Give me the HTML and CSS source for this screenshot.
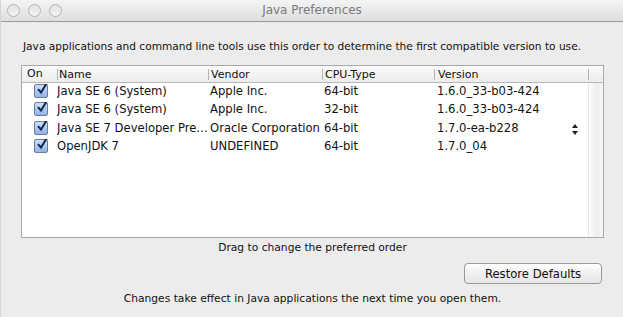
FILE: index.html
```html
<!DOCTYPE html>
<html>
<head>
<meta charset="utf-8">
<link rel="stylesheet" href="styles.css">
</head>
<body>
<div class="window">
  <div class="titlebar">
    <div class="lights"><span class="light"></span><span class="light"></span><span class="light"></span></div>
    <div class="title">Java Preferences</div>
  </div>
  <div class="content">
    <p class="intro">Java applications and command line tools use this order to determine the first compatible version to use.</p>
    <div class="table">
      <div class="thead">
        <div class="c on">On</div>
        <div class="c name sep">Name</div>
        <div class="c vendor sep">Vendor</div>
        <div class="c cpu sep">CPU-Type</div>
        <div class="c ver sep">Version</div>
        <div class="c gut sep"></div>
      </div>
      <div class="tbody">
        <div class="rows">
          <div class="row">
            <div class="c on"><span class="cb"><svg viewBox="0 0 14 14" width="14" height="14"><path d="M3 7.2 L6 10.5 L11.5 1.5" fill="none" stroke="#14284a" stroke-width="2"/></svg></span></div>
            <div class="c name">Java SE 6 (System)</div>
            <div class="c vendor">Apple Inc.</div>
            <div class="c cpu">64-bit</div>
            <div class="c ver">1.6.0_33-b03-424</div>
          </div>
          <div class="row">
            <div class="c on"><span class="cb"><svg viewBox="0 0 14 14" width="14" height="14"><path d="M3 7.2 L6 10.5 L11.5 1.5" fill="none" stroke="#14284a" stroke-width="2"/></svg></span></div>
            <div class="c name">Java SE 6 (System)</div>
            <div class="c vendor">Apple Inc.</div>
            <div class="c cpu">32-bit</div>
            <div class="c ver">1.6.0_33-b03-424</div>
          </div>
          <div class="row">
            <div class="c on"><span class="cb"><svg viewBox="0 0 14 14" width="14" height="14"><path d="M3 7.2 L6 10.5 L11.5 1.5" fill="none" stroke="#14284a" stroke-width="2"/></svg></span></div>
            <div class="c name">Java SE 7 Developer Pre…</div>
            <div class="c vendor">Oracle Corporation</div>
            <div class="c cpu">64-bit</div>
            <div class="c ver">1.7.0-ea-b228<span class="stepper"><svg viewBox="0 0 6 11" width="6" height="11"><path d="M3 0 L6 4 L0 4 Z M0 7 L6 7 L3 11 Z" fill="#222"/></svg></span></div>
          </div>
          <div class="row">
            <div class="c on"><span class="cb"><svg viewBox="0 0 14 14" width="14" height="14"><path d="M3 7.2 L6 10.5 L11.5 1.5" fill="none" stroke="#14284a" stroke-width="2"/></svg></span></div>
            <div class="c name">OpenJDK 7</div>
            <div class="c vendor">UNDEFINED</div>
            <div class="c cpu">64-bit</div>
            <div class="c ver">1.7.0_04</div>
          </div>
        </div>
        <div class="gutter"></div>
      </div>
    </div>
    <p class="hint">Drag to change the preferred order</p>
    <div class="btnrow"><button class="btn">Restore Defaults</button></div>
    <p class="hint foot">Changes take effect in Java applications the next time you open them.</p>
  </div>
</div>
</body>
</html>
```

FILE: styles.css
```css
html, body {
  margin: 0;
  padding: 0;
  background: #ececec;
}
body {
  width: 623px;
  height: 317px;
  overflow: hidden;
  font-family: "DejaVu Sans", "Liberation Sans", sans-serif;
  font-size: 10.7px;
  color: #111;
}
.window {
  width: 623px;
  height: 317px;
  display: flex;
  flex-direction: column;
  border-left: 1px solid #d4d4d4;
  box-sizing: border-box;
}
.titlebar {
  height: 21px;
  flex: none;
  display: flex;
  align-items: center;
  position: relative;
  background: linear-gradient(#f4f4f4, #dedede);
  border-bottom: 1px solid #9a9a9a;
}
.lights {
  display: flex;
  gap: 8px;
  padding-left: 6px;
}
.light {
  width: 11px;
  height: 11px;
  border-radius: 50%;
  border: 1px solid #b4b4b4;
  background: linear-gradient(#e2e2e2, #f4f4f4);
}
.title {
  position: absolute;
  left: 0;
  right: 0;
  top: 0;
  line-height: 21px;
  text-align: center;
  color: #7a7a7a;
  font-size: 12px;
}
.content {
  flex: 1;
  padding: 0 19px 0 20px;
  display: flex;
  flex-direction: column;
}
.intro {
  margin: 18px 0 0 2px;
  font-size: 10.6px;
  line-height: 13px;
  white-space: nowrap;
}
.table {
  margin-top: 12px;
  height: 171px;
  flex: none;
  border: 1px solid #a9a9a9;
  background: #fff;
  display: flex;
  flex-direction: column;
}
.thead {
  height: 16px;
  flex: none;
  display: flex;
  background: linear-gradient(#fafafa, #ececec);
  border-bottom: 1px solid #b8b8b8;
  line-height: 16px;
  font-size: 11px;
}
.c {
  box-sizing: border-box;
  white-space: nowrap;
  overflow: hidden;
}
.thead .sep {
  border-left: 1px solid #b4b4b4;
  height: 11px;
  margin-top: 3px;
  line-height: 11px;
}
.on { width: 35px; padding-left: 5px; }
.name { width: 151px; padding-left: 1px; }
.vendor { width: 114px; padding-left: 2px; }
.cpu { width: 112px; padding-left: 2px; }
.ver { width: 154px; padding-left: 3px; position: relative; }
.gut { flex: 1; }
.tbody {
  flex: 1;
  display: flex;
}
.rows {
  flex: 1;
  margin-top: -1px;
}
.gutter {
  width: 15px;
  background: linear-gradient(90deg, #fafafa, #eeeeee 60%, #f6f6f6);
  border-left: 1px solid #e6e6e6;
}
.row {
  display: flex;
  height: 18.3px;
  align-items: center;
  font-size: 11.6px;
}
.row .on {
  padding-left: 12px;
  display: flex;
  align-items: center;
}
.row .name { padding-left: 0; }
.cb {
  width: 12px;
  height: 12px;
  border: 1px solid #6c7d99;
  border-radius: 2px;
  background: linear-gradient(#cde0f8, #8fb4e8);
  position: relative;
  display: block;
}
.cb svg {
  position: absolute;
  left: 0;
  top: -3px;
}
.stepper {
  position: absolute;
  left: 138px;
  top: 3px;
  line-height: 0;
}
.hint {
  margin: 3px 0 0 0;
  text-align: center;
  font-size: 10.7px;
  line-height: 13px;
}
.btnrow {
  display: flex;
  justify-content: flex-end;
  margin-top: 9px;
  padding-right: 2px;
}
.btn {
  width: 138px;
  height: 21px;
  border: 1px solid #9a9a9a;
  border-radius: 4px;
  background: linear-gradient(#ffffff, #f0f0f0 50%, #e6e6e6);
  font-family: "DejaVu Sans", "Liberation Sans", sans-serif;
  font-size: 11.6px;
  color: #111;
  padding: 0;
}
.foot {
  margin-top: 8px;
}
```
